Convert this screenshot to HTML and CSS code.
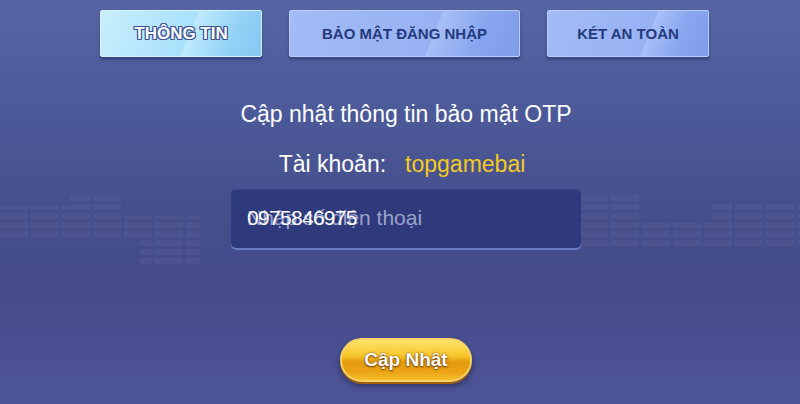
FILE: index.html
```html
<!DOCTYPE html>
<html lang="vi">
<head>
    <meta charset="UTF-8">
    <meta name="viewport" content="width=device-width, initial-scale=1.0">
    <title>Cập nhật thông tin</title>
    <link rel="stylesheet" href="styles.css">
</head>
<body>
    <div class="screen">
        <div class="backdrop">
            <div class="eq eq-left"></div>
            <div class="eq eq-right"></div>
        </div>

        <nav class="tabs">
            <button class="tab active">THÔNG TIN</button>
            <button class="tab wide">BẢO MẬT ĐĂNG NHẬP</button>
            <button class="tab">KÉT AN TOÀN</button>
        </nav>

        <main class="panel">
            <h1 class="title">Cập nhật thông tin bảo mật OTP</h1>
            <p class="account">
                <span>Tài khoản:</span>
                <span class="username">topgamebai</span>
            </p>
            <div class="field">
                <span class="placeholder">Nhập số điện thoại</span>
                <span class="value">0975846975</span>
            </div>
            <button class="submit">Cập Nhật</button>
        </main>
    </div>
</body>
</html>
```

FILE: styles.css
```css
body {
    margin: 0;
    font-family: 'Liberation Sans', Arial, sans-serif;
    color: #ffffff;
    background: #454c8b;
}
.screen {
    position: relative;
    width: 800px;
    height: 404px;
    overflow: hidden;
    background: linear-gradient(180deg, #5664a4 0%, #4d5b9a 25%, #454d8b 55%, #464b8b 75%, #4e5599 100%);
}

/* faint equalizer blocks behind the form */
.backdrop {
    position: absolute;
    inset: 0;
    pointer-events: none;
}
.eq {
    position: absolute;
    top: 195px;
    height: 70px;
    opacity: 0.04;
    background: repeating-linear-gradient(180deg, #ffffff 0 6px, transparent 6px 9px);
    -webkit-mask: repeating-linear-gradient(90deg, #000 0 28px, transparent 28px 31px);
}
.eq-left {
    left: 0;
    width: 200px;
    clip-path: polygon(0 15%, 35% 15%, 35% 0, 62% 0, 62% 30%, 100% 30%, 100% 100%, 70% 100%, 70% 60%, 0 60%);
}
.eq-right {
    right: 0;
    width: 220px;
    clip-path: polygon(0 0, 28% 0, 28% 40%, 60% 40%, 60% 10%, 100% 10%, 100% 75%, 0 75%);
}

.tabs {
    position: relative;
    display: flex;
    justify-content: center;
    gap: 27px;
    padding: 10px 0 0 9px;
}
.tab {
    height: 47px;
    width: 162px;
    border: 1px solid #b9cdf9;
    border-radius: 2px;
    font-family: 'Liberation Sans', Arial, sans-serif;
    font-size: 15px;
    font-weight: bold;
    color: #243a7c;
    background: linear-gradient(112deg, #a3bcf6 0%, #97b1f3 62%, #a8c0f8 62%, #8aa6ef 80%, #7f9cea 100%);
    box-shadow: 0 2px 0 #3a4785, 0 3px 3px rgba(20, 25, 70, 0.35);
    padding: 0;
    cursor: pointer;
}
.tab.wide {
    width: 231px;
}
.tab.active {
    font-size: 17px;
    color: #ffffff;
    border-color: #d5f3ff;
    background: linear-gradient(112deg, #c8effd 0%, #a9e0fb 55%, #bfeafd 55%, #93d2f6 80%, #86c8f3 100%);
    text-shadow:
        1px 1px 0 #3d5394, -1px -1px 0 #3d5394, 1px -1px 0 #3d5394, -1px 1px 0 #3d5394,
        0 1px 0 #3d5394, 0 -1px 0 #3d5394, 1px 0 0 #3d5394, -1px 0 0 #3d5394;
}

.panel {
    position: relative;
    display: flex;
    flex-direction: column;
    align-items: center;
    padding: 44px 0 0 12px;
}
.title {
    margin: 0;
    font-size: 23px;
    line-height: 26px;
    font-weight: normal;
}
.account {
    margin: 24px 0 0;
    font-size: 23px;
    line-height: 26px;
    display: flex;
    gap: 19px;
    padding-right: 8px;
}
.username {
    color: #f4cb1f;
}
.field {
    margin-top: 12px;
    width: 350px;
    height: 59px;
    box-sizing: border-box;
    display: grid;
    align-items: center;
    padding: 0 16px 2px;
    border-radius: 5px;
    background: #2e3a7c;
    box-shadow: 0 2px 0 #6c7bc0, inset 0 1px 0 #3a4687;
}
.placeholder,
.value {
    grid-area: 1 / 1;
}
.placeholder {
    color: #9aa2cc;
    font-size: 21px;
}
.value {
    color: #ffffff;
    font-size: 21px;
    letter-spacing: -0.7px;
}
.submit {
    margin-top: 90px;
    width: 132px;
    height: 44px;
    border: 2px solid #f8d36a;
    border-radius: 22px;
    font-family: 'Liberation Sans', Arial, sans-serif;
    font-size: 19px;
    font-weight: bold;
    color: #ffffff;
    text-shadow: 0 1px 2px #6b3a00, 0 0 2px #8a4a00;
    background: linear-gradient(180deg, #ffe36a 0%, #f7c52a 40%, #e39a0c 55%, #eba415 80%, #f5c02e 100%);
    box-shadow: 0 2px 0 #a0610a, 0 4px 6px rgba(10, 10, 40, 0.45);
    cursor: pointer;
}
```
